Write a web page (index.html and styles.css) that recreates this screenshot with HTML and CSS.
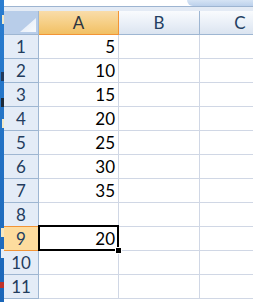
FILE: index.html
```html
<!DOCTYPE html>
<html lang="en">
<head>
    <meta charset="UTF-8">
    <title>Sheet1</title>
    <link rel="stylesheet" href="styles.css">
</head>
<body>
    <div class="screen">
        <!-- pedaço do desktop atrás da janela -->
        <div class="desktop">
            <span class="frag f1"></span>
            <span class="frag f2"></span>
            <span class="frag f3"></span>
            <span class="frag f4"></span>
            <span class="frag f5"></span>
            <span class="frag f6"></span>
            <span class="frag red"></span>
        </div>

        <div class="excel">
            <div class="formula-edge"><div class="tab"></div></div>
            <div class="head-band"></div>

            <div class="grid">
                <div class="corner"><span class="tri"></span></div>
                <div class="col-head active">A</div>
                <div class="col-head">B</div>
                <div class="col-head">C</div>

                <div class="row-head">1</div><div class="cell">5</div><div class="cell"></div><div class="cell"></div>
                <div class="row-head">2</div><div class="cell">10</div><div class="cell"></div><div class="cell"></div>
                <div class="row-head">3</div><div class="cell">15</div><div class="cell"></div><div class="cell"></div>
                <div class="row-head">4</div><div class="cell">20</div><div class="cell"></div><div class="cell"></div>
                <div class="row-head">5</div><div class="cell">25</div><div class="cell"></div><div class="cell"></div>
                <div class="row-head">6</div><div class="cell">30</div><div class="cell"></div><div class="cell"></div>
                <div class="row-head">7</div><div class="cell">35</div><div class="cell"></div><div class="cell"></div>
                <div class="row-head above-sel">8</div><div class="cell"></div><div class="cell"></div><div class="cell"></div>
                <div class="row-head active">9</div>
                <div class="cell selected">20<span class="sel-box"></span><span class="fill-handle"></span></div>
                <div class="cell"></div><div class="cell"></div>
                <div class="row-head">10</div><div class="cell"></div><div class="cell"></div><div class="cell"></div>
                <div class="row-head">11</div><div class="cell"></div><div class="cell"></div><div class="cell"></div>
            </div>
        </div>
    </div>
</body>
</html>
```

FILE: styles.css
```css
body {
    margin: 0;
    background: #fff;
    font-family: 'Lato', 'Liberation Sans', sans-serif;
}
.screen {
    display: flex;
    width: 253px;
    height: 302px;
    overflow: hidden;
}

/* faixa azul do desktop */
.desktop {
    width: 4px;
    flex-shrink: 0;
    background: linear-gradient(#2a7dd0, #1b66b8);
    display: flex;
    flex-direction: column;
    align-items: flex-end;
    overflow: hidden;
}
.frag {
    display: block;
    width: 2px;
    height: 9px;
    background: #f2e9c8;
}
.f1 { margin-top: 15px; }
.f2 { margin-top: 48px; width: 3px; background: #233a5c; }
.f3 { margin-top: 17px; width: 3px; background: #1b2a3a; }
.f4 { margin-top: 12px; }
.f5 { margin-top: 100px; width: 3px; background: #f6e7c0; }
.f6 { margin-top: 12px; width: 3px; background: #e6edf5; }
.red {
    margin-top: 24px;
    width: 4px;
    height: 6px;
    background: #c0322a;
}

.excel {
    flex: 1;
    display: flex;
    flex-direction: column;
    overflow: hidden;
}
.formula-edge {
    height: 6px;
    border-bottom: 1px solid #9db4d1;
    display: flex;
    justify-content: flex-end;
}
.tab {
    width: 66px;
    height: 6px;
    background: linear-gradient(#d5e3f4, #bcd1ec);
    border-bottom-left-radius: 9px;
}
.head-band {
    height: 4px;
    background: #e4ebf5;
}

.grid {
    display: grid;
    grid-template-columns: 35px 80px 81px 81px;
    grid-auto-rows: 24px;
}
.grid > div {
    box-sizing: border-box;
}

.corner {
    position: relative;
    background: #b8cde9;
    border-right: 1px solid #9eb6d2;
    border-bottom: 1px solid #9eb6d2;
}
.tri {
    position: absolute;
    right: 2px;
    bottom: 2px;
    width: 16px;
    height: 14px;
    background: linear-gradient(135deg, #dfe9f6, #f7fafe);
    clip-path: polygon(100% 0, 100% 100%, 0 100%);
}

.col-head {
    display: flex;
    align-items: center;
    justify-content: center;
    font-size: 17px;
    color: #243f62;
    background: linear-gradient(#f9fbfd, #e9eff7 55%, #dbe4f0);
    border-right: 1px solid #9eb6d2;
    border-bottom: 1px solid #9eb6d2;
}
.col-head.active {
    color: #2c3440;
    background: linear-gradient(#f9dcaa, #f6cf86 50%, #f1c064);
    border-right-color: #f29436;
    border-bottom-color: #f29436;
}

.row-head {
    display: flex;
    align-items: center;
    justify-content: center;
    font-size: 17px;
    color: #233c5e;
    background: #e4ecf7;
    border-right: 1px solid #9eb6d2;
    border-bottom: 1px solid #9eb6d2;
}
.row-head.above-sel {
    border-bottom-color: #f29436;
}
.row-head.active {
    background: #fddc9e;
    border-bottom-color: #f29436;
}

.cell {
    display: flex;
    align-items: center;
    justify-content: flex-end;
    padding-right: 3px;
    font-size: 17px;
    color: #000;
    border-right: 1px solid #d0d7e5;
    border-bottom: 1px solid #d0d7e5;
}
.cell.selected {
    position: relative;
}
.sel-box {
    position: absolute;
    top: -2px;
    left: -1px;
    right: -1px;
    bottom: -1px;
    border: 2px solid #000;
}
.fill-handle {
    position: absolute;
    right: -4px;
    bottom: -4px;
    width: 5px;
    height: 5px;
    background: #000;
    border: 1px solid #fff;
}
```
